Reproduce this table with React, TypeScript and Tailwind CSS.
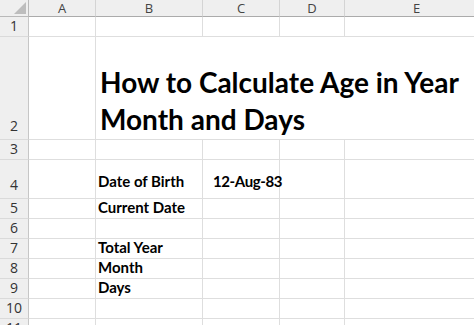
import React from 'react';

// Column widths include the 1px right grid line
const cols = [
  { key: 'A', w: 'w-[67px]' },
  { key: 'B', w: 'w-[107px]' },
  { key: 'C', w: 'w-[77px]' },
  { key: 'D', w: 'w-[65px]' },
  { key: 'E', w: 'w-[144px]' },
];

type Row = { n: number; h: string; pb: string; nb: string; b?: string; c?: string };

const rows: Row[] = [
  { n: 1, h: 'h-[20px]', pb: 'pb-[2px]', nb: 'pb-[1px]' },
  { n: 3, h: 'h-[20px]', pb: 'pb-[2px]', nb: 'pb-[1px]' },
  { n: 4, h: 'h-[39px]', pb: 'pb-[8px]', nb: 'pb-[4px]', b: 'Date of Birth', c: '12-Aug-83' },
  { n: 5, h: 'h-[20px]', pb: 'pb-[2px]', nb: 'pb-[1px]', b: 'Current Date' },
  { n: 6, h: 'h-[20px]', pb: 'pb-[2px]', nb: 'pb-[1px]' },
  { n: 7, h: 'h-[20px]', pb: 'pb-[2px]', nb: 'pb-[1px]', b: 'Total Year' },
  { n: 8, h: 'h-[20px]', pb: 'pb-[2px]', nb: 'pb-[1px]', b: 'Month' },
  { n: 9, h: 'h-[20px]', pb: 'pb-[2px]', nb: 'pb-[1px]', b: 'Days' },
  { n: 10, h: 'h-[20px]', pb: 'pb-[2px]', nb: 'pb-[1px]' },
  { n: 11, h: 'h-[20px]', pb: 'pb-[2px]', nb: 'pb-[1px]' },
];

function RowHead({ n, h, nb }: { n: number; h: string; nb: string }) {
  return (
    <div
      className={`${h} ${nb} w-[29px] shrink-0 bg-[#efefef] border-r border-r-[#c6c6c6] border-b border-b-[#dadada] flex items-end justify-center text-[14px] leading-[18px] text-[#333]`}
      style={{ fontFamily: '"Open Sans", sans-serif' }}
    >
      {n}
    </div>
  );
}

function Cell({ w, h, pb, children }: { w: string; h: string; pb: string; children?: React.ReactNode }) {
  return (
    <div className={`${w} ${h} ${pb} shrink-0 border-r border-b border-[#dedede] flex items-end pl-[2px]`}>
      <span className="text-[15px] leading-[18px] font-bold text-black whitespace-nowrap">{children}</span>
    </div>
  );
}

function GridRow({ r }: { r: Row }) {
  return (
    <div className="flex">
      <RowHead n={r.n} h={r.h} nb={r.nb} />
      <Cell w="w-[67px]" h={r.h} pb={r.pb} />
      <Cell w="w-[107px]" h={r.h} pb={r.pb}>{r.b}</Cell>
      <Cell w="w-[77px]" h={r.h} pb={r.pb}>
        {r.c && <span className="pl-[8px] tracking-[-0.4px]">{r.c}</span>}
      </Cell>
      <Cell w="w-[65px]" h={r.h} pb={r.pb} />
      <Cell w="w-[144px]" h={r.h} pb={r.pb} />
    </div>
  );
}

export default function App() {
  return (
    <div
      className="w-[474px] h-[325px] overflow-hidden bg-white"
      style={{ fontFamily: 'Lato, "Open Sans", sans-serif' }}
    >
      {/* column headers */}
      <div className="flex h-[17px]">
        <div className="relative w-[29px] shrink-0 bg-[#efefef] border-r border-b border-[#b9b9b9]">
          <div className="absolute right-[2px] bottom-[2px] w-0 h-0 border-l-[12px] border-l-transparent border-b-[12px] border-b-[#bdbdbd]" />
        </div>
        {cols.map((c) => (
          <div
            key={c.key}
            className={`${c.w} shrink-0 bg-[#efefef] border-r border-r-[#d4d4d4] border-b border-b-[#ababab] flex items-center justify-center text-[13px] leading-[15px] text-[#444]`}
            style={{ fontFamily: '"Open Sans", sans-serif' }}
          >
            {c.key}
          </div>
        ))}
      </div>

      <GridRow r={rows[0]} />

      {/* row 2: merged title B2:E2 */}
      <div className="flex">
        <RowHead n={2} h="h-[103px]" nb="pb-[4px]" />
        <div className="w-[67px] h-[103px] shrink-0 border-r border-b border-[#dedede]" />
        <div className="w-[393px] h-[103px] shrink-0 border-b border-[#dedede] flex items-end pl-[4px] pb-[1px]">
          <h1 className="text-[28px] leading-[37px] font-bold text-black">
            How to Calculate Age in Year
            <br />
            Month and Days
          </h1>
        </div>
      </div>

      {rows.slice(1).map((r) => (
        <GridRow key={r.n} r={r} />
      ))}
    </div>
  );
}
